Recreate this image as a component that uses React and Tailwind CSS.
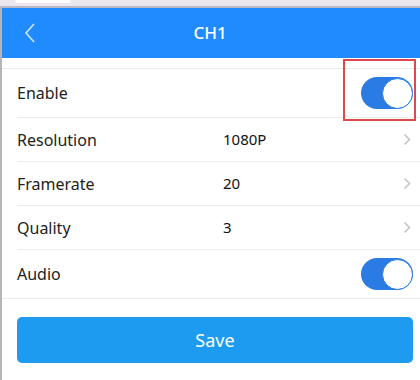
import React from "react";

function Toggle() {
  return (
    <div className="w-[52px] h-[32px] rounded-full bg-[#2a7be4] flex items-center justify-end">
      <div className="w-[31px] h-[31px] rounded-full bg-white border border-[#2a7be4]" />
    </div>
  );
}

function Chevron() {
  return (
    <svg width="8" height="13" viewBox="0 0 8 13" className="mr-[2px]">
      <path d="M1.5 1.5 L6.5 6.5 L1.5 11.5" fill="none" stroke="#c4c4c4" strokeWidth="1.6" />
    </svg>
  );
}

function Row({ label, value, h, toggle, last }) {
  return (
    <div className={`flex items-center ml-[15px] pr-[7px] ${last ? "" : "border-b border-[#ececec]"} ${h}`}>
      <div className="w-[206px] text-[16px] text-[#222]">{label}</div>
      <div className="flex-1 text-[15px] text-[#111]">{value}</div>
      {toggle ? <Toggle /> : <Chevron />}
    </div>
  );
}

export default function App() {
  return (
    <div className="w-[420px] h-[380px] bg-white overflow-hidden relative" style={{ fontFamily: '"Noto Sans", "Open Sans", sans-serif' }}>
      <div className="h-[6px] bg-[#ece7ee] relative">
        <div className="absolute left-[15px] top-0 w-[56px] h-[3px] bg-white rounded-b-[3px]" />
      </div>
      <div className="h-[2px] bg-[#b9b8c3]" />
      <div className="border-l-2 border-[#b5b5b5] h-[372px]">
        <div className="h-[50px] bg-[#1f8bff] flex items-center relative">
          <svg width="14" height="22" viewBox="0 0 14 22" className="ml-[21px]">
            <path d="M11 2 L3 11 L11 20" fill="none" stroke="#cfe5ff" strokeWidth="1.6" />
          </svg>
          <div className="absolute inset-0 flex items-center justify-center text-white text-[17px] font-medium pr-[2px]">CH1</div>
        </div>
        <div className="h-[10px]" />
        <div className="border-t border-[#ececec]">
          <div className="flex items-center ml-[15px] pr-[7px] border-b border-[#ececec] h-[49px]">
            <div className="flex-1 text-[16px] text-[#222]">Enable</div>
            <Toggle />
          </div>
          <Row label="Resolution" value="1080P" h="h-[44px]" />
          <Row label="Framerate" value="20" h="h-[44px]" />
          <Row label="Quality" value="3" h="h-[44px]" />
          <Row label="Audio" value="" h="h-[48px]" toggle last />
        </div>
        <div className="border-t border-[#ececec] pl-[15px] pt-[18px] pr-[7px]">
          <button className="w-full h-[46px] rounded-[5px] bg-[#1c9bf1] text-white text-[18px]">Save</button>
        </div>
      </div>
      <div className="absolute left-[343px] top-[59px] w-[73px] h-[62px] border-2 border-[#e0474c]" />
    </div>
  );
}
